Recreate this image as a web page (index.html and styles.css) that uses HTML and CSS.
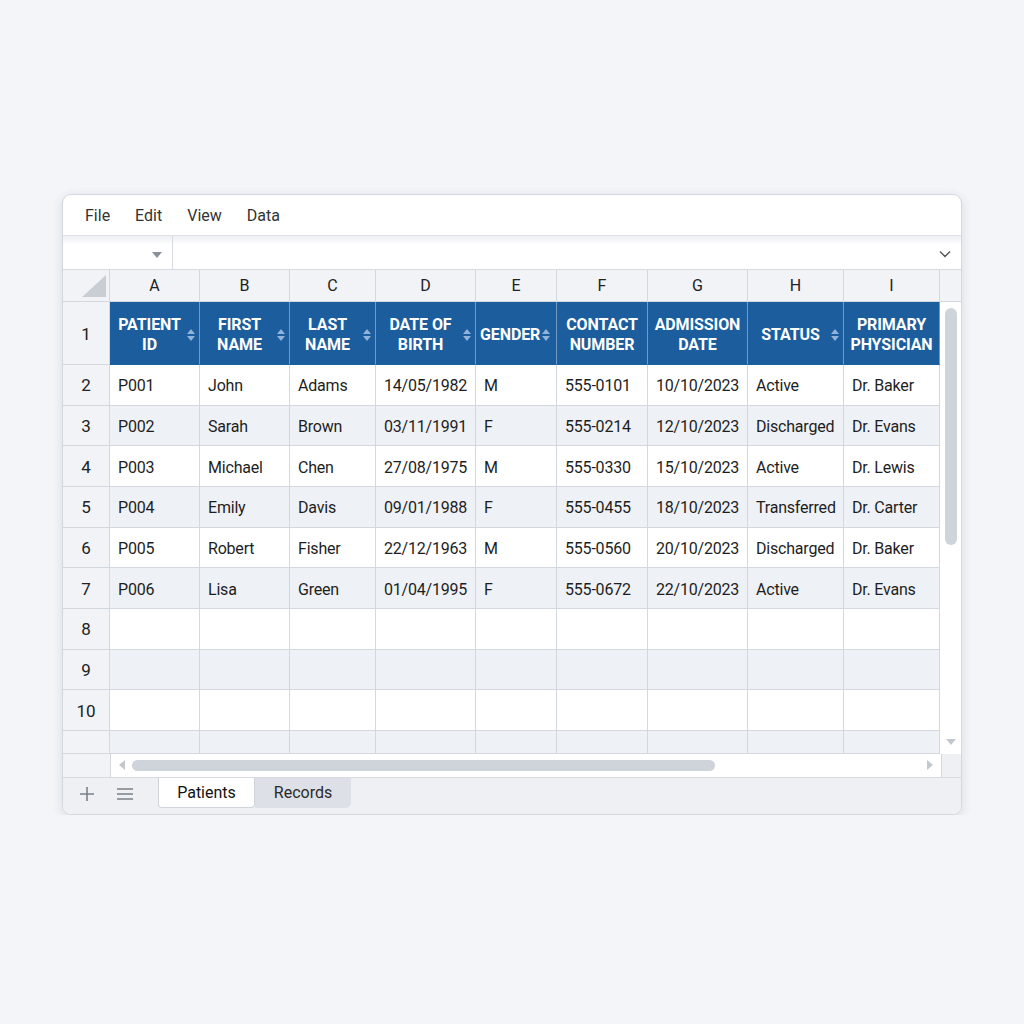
FILE: index.html
```html
<!DOCTYPE html>
<html lang="en">
<head>
  <meta charset="UTF-8">
  <title>Patients</title>
  <link rel="stylesheet" href="styles.css">
</head>
<body>

<div class="window">
  <div class="menubar">
    <span>File</span>
    <span>Edit</span>
    <span>View</span>
    <span>Data</span>
  </div>

  <div class="formulabar">
    <div class="namebox">
      <svg width="10" height="6" viewBox="0 0 10 6"><path d="M0 0h10L5 6z" fill="#8a9099"/></svg>
    </div>
    <div class="formula">
      <svg width="12" height="8" viewBox="0 0 12 8"><path d="M1 1.5l5 5 5-5" fill="none" stroke="#555" stroke-width="1.4"/></svg>
    </div>
  </div>

  <div class="sheet">
    <div class="cells">
      <!-- column letters -->
      <div class="corner">
        <svg width="24" height="22" viewBox="0 0 24 22"><path d="M24 0V22H0z" fill="#c9ced5"/></svg>
      </div>
      <div class="colhead">A</div>
      <div class="colhead">B</div>
      <div class="colhead">C</div>
      <div class="colhead">D</div>
      <div class="colhead">E</div>
      <div class="colhead">F</div>
      <div class="colhead">G</div>
      <div class="colhead">H</div>
      <div class="colhead">I</div>

      <!-- row 1: titles -->
      <div class="rowhead">1</div>
      <div class="th"><span>Patient<br>ID</span><svg class="sort" width="8" height="12" viewBox="0 0 8 12"><path d="M4 0L8 5H0zM0 7h8L4 12z"/></svg></div>
      <div class="th"><span>First<br>Name</span><svg class="sort" width="8" height="12" viewBox="0 0 8 12"><path d="M4 0L8 5H0zM0 7h8L4 12z"/></svg></div>
      <div class="th"><span>Last<br>Name</span><svg class="sort" width="8" height="12" viewBox="0 0 8 12"><path d="M4 0L8 5H0zM0 7h8L4 12z"/></svg></div>
      <div class="th"><span>Date of<br>Birth</span><svg class="sort" width="8" height="12" viewBox="0 0 8 12"><path d="M4 0L8 5H0zM0 7h8L4 12z"/></svg></div>
      <div class="th tight"><span>Gender</span><svg class="sort" width="8" height="12" viewBox="0 0 8 12"><path d="M4 0L8 5H0zM0 7h8L4 12z"/></svg></div>
      <div class="th"><span>Contact<br>Number</span></div>
      <div class="th"><span>Admission<br>Date</span></div>
      <div class="th"><span>Status</span><svg class="sort" width="8" height="12" viewBox="0 0 8 12"><path d="M4 0L8 5H0zM0 7h8L4 12z"/></svg></div>
      <div class="th"><span>Primary<br>Physician</span></div>

      <div class="rowhead">2</div>
      <div class="td">P001</div><div class="td">John</div><div class="td">Adams</div><div class="td">14/05/1982</div><div class="td">M</div><div class="td">555-0101</div><div class="td">10/10/2023</div><div class="td">Active</div><div class="td">Dr. Baker</div>

      <div class="rowhead">3</div>
      <div class="td alt">P002</div><div class="td alt">Sarah</div><div class="td alt">Brown</div><div class="td alt">03/11/1991</div><div class="td alt">F</div><div class="td alt">555-0214</div><div class="td alt">12/10/2023</div><div class="td alt">Discharged</div><div class="td alt">Dr. Evans</div>

      <div class="rowhead">4</div>
      <div class="td">P003</div><div class="td">Michael</div><div class="td">Chen</div><div class="td">27/08/1975</div><div class="td">M</div><div class="td">555-0330</div><div class="td">15/10/2023</div><div class="td">Active</div><div class="td">Dr. Lewis</div>

      <div class="rowhead">5</div>
      <div class="td alt">P004</div><div class="td alt">Emily</div><div class="td alt">Davis</div><div class="td alt">09/01/1988</div><div class="td alt">F</div><div class="td alt">555-0455</div><div class="td alt">18/10/2023</div><div class="td alt">Transferred</div><div class="td alt">Dr. Carter</div>

      <div class="rowhead">6</div>
      <div class="td">P005</div><div class="td">Robert</div><div class="td">Fisher</div><div class="td">22/12/1963</div><div class="td">M</div><div class="td">555-0560</div><div class="td">20/10/2023</div><div class="td">Discharged</div><div class="td">Dr. Baker</div>

      <div class="rowhead">7</div>
      <div class="td alt">P006</div><div class="td alt">Lisa</div><div class="td alt">Green</div><div class="td alt">01/04/1995</div><div class="td alt">F</div><div class="td alt">555-0672</div><div class="td alt">22/10/2023</div><div class="td alt">Active</div><div class="td alt">Dr. Evans</div>

      <div class="rowhead">8</div>
      <div class="td"></div><div class="td"></div><div class="td"></div><div class="td"></div><div class="td"></div><div class="td"></div><div class="td"></div><div class="td"></div><div class="td"></div>

      <div class="rowhead">9</div>
      <div class="td alt"></div><div class="td alt"></div><div class="td alt"></div><div class="td alt"></div><div class="td alt"></div><div class="td alt"></div><div class="td alt"></div><div class="td alt"></div><div class="td alt"></div>

      <div class="rowhead">10</div>
      <div class="td"></div><div class="td"></div><div class="td"></div><div class="td"></div><div class="td"></div><div class="td"></div><div class="td"></div><div class="td"></div><div class="td"></div>

      <div class="rowhead"></div>
      <div class="td alt"></div><div class="td alt"></div><div class="td alt"></div><div class="td alt"></div><div class="td alt"></div><div class="td alt"></div><div class="td alt"></div><div class="td alt"></div><div class="td alt"></div>
    </div>

    <div class="vscroll">
      <div class="vcap"></div>
      <div class="vtrack">
        <div class="vthumb"></div>
        <svg class="vdown" width="10" height="6" viewBox="0 0 10 6"><path d="M0 0h10L5 6z" fill="#c3c8cf"/></svg>
      </div>
    </div>
  </div>

  <div class="hscroll">
    <div class="hleft"></div>
    <div class="htrack">
      <svg width="6" height="10" viewBox="0 0 6 10"><path d="M6 0v10L0 5z" fill="#c3c8cf"/></svg>
      <div class="hthumb"></div>
      <svg width="6" height="10" viewBox="0 0 6 10"><path d="M0 0v10l6-5z" fill="#c3c8cf"/></svg>
    </div>
    <div class="hright"></div>
  </div>

  <div class="tabbar">
    <div class="tabtools">
      <svg width="14" height="14" viewBox="0 0 14 14"><path d="M7 0v14M0 7h14" stroke="#7a8089" stroke-width="1.6"/></svg>
      <svg width="16" height="12" viewBox="0 0 16 12"><path d="M0 1h16M0 6h16M0 11h16" stroke="#7a8089" stroke-width="1.6"/></svg>
    </div>
    <div class="tab active">Patients</div>
    <div class="tab">Records</div>
  </div>
</div>

</body>
</html>
```

FILE: styles.css
```css
body {
  margin: 0;
  padding: 194px 0 0 62px;
  background: #f3f5f9;
  font-family: Roboto, "Liberation Sans", sans-serif;
  color: #222;
}

.window {
  width: 900px;
  box-sizing: border-box;
  background: #fff;
  border: 1px solid #d3d8de;
  border-radius: 9px;
  box-shadow: 0 3px 12px rgba(30, 40, 60, 0.12);
  overflow: hidden;
}

/* menu */
.menubar {
  height: 40px;
  display: flex;
  align-items: center;
  gap: 25px;
  padding-left: 22px;
  font-size: 16px;
  color: #333;
  border-bottom: 1px solid #dde1e6;
}

.formulabar {
  height: 33px;
  display: flex;
  background: linear-gradient(#eef1f4 0, #f6f7f9 5px, #fff 8px);
  border-bottom: 1px solid #d7dbe1;
}

.namebox {
  width: 110px;
  border-right: 1px solid #d7dbe1;
  display: flex;
  align-items: center;
  justify-content: flex-end;
  padding: 4px 10px 0 0;
  box-sizing: border-box;
}

.formula {
  flex: 1;
  display: flex;
  align-items: center;
  justify-content: flex-end;
  padding: 3px 10px 0 0;
}

/* grid */
.sheet {
  display: flex;
}

.cells {
  display: grid;
  grid-template-columns: 47px 90px 90px 86px 100px 81px 91px 100px 96px 96px;
  grid-template-rows: 32px 63px repeat(9, 40.67px) 23px;
  font-size: 16px;
}

.cells > div {
  box-sizing: border-box;
  border-right: 1px solid #d3d8df;
  border-bottom: 1px solid #d3d8df;
}

.corner {
  background: #f1f3f6;
  display: flex;
  align-items: flex-end;
  justify-content: flex-end;
  padding: 0 3px 4px 0;
}

.colhead {
  background: #f1f3f6;
  display: flex;
  align-items: center;
  justify-content: center;
  color: #222;
}

.rowhead {
  background: #f1f3f6;
  display: flex;
  align-items: center;
  justify-content: center;
  font-size: 17px;
  padding-top: 1px;
}

.th {
  background: #1b5d9d;
  color: #fff;
  font-weight: bold;
  text-transform: uppercase;
  font-size: 16px;
  line-height: 20px;
  letter-spacing: -0.1px;
  display: flex;
  align-items: center;
  padding: 3px 4px 0 4px;
  border-right-color: #6f9ac6 !important;
  border-bottom-color: #1b5d9d !important;
}

.th span {
  flex: 1;
  text-align: center;
}

.th.tight span {
  flex: none;
}

.sort {
  flex: none;
  margin-left: 2px;
  fill: #8fb3d9;
}

.td {
  display: flex;
  align-items: center;
  padding: 2px 0 0 8px;
  letter-spacing: -0.2px;
  color: #1e1e1e;
}

.td.alt {
  background: #eef1f6;
}

/* scrollbars */
.vscroll {
  width: 21px;
  display: flex;
  flex-direction: column;
}

.vcap {
  height: 32px;
  background: #f1f3f6;
  border-bottom: 1px solid #d3d8df;
  box-sizing: border-box;
}

.vtrack {
  flex: 1;
  position: relative;
  padding-top: 6px;
}

.vthumb {
  width: 12px;
  height: 237px;
  margin-left: 5px;
  border-radius: 6px;
  background: #cfd4da;
}

.vdown {
  position: absolute;
  left: 6px;
  bottom: 9px;
}

.hscroll {
  height: 23px;
  display: flex;
  border-bottom: 1px solid #d7dbe1;
}

.hleft {
  width: 47px;
  background: #f1f3f6;
  border-right: 1px solid #d3d8df;
}

.htrack {
  width: 830px;
  display: flex;
  align-items: center;
  gap: 7px;
  padding: 0 8px 0 8px;
  box-sizing: border-box;
}

.hthumb {
  width: 583px;
  height: 11px;
  border-radius: 6px;
  background: #cfd4da;
  margin-right: auto;
}

.hright {
  flex: 1;
  background: #eef0f3;
  border-left: 1px solid #d3d8df;
}

/* sheet tabs */
.tabbar {
  height: 36px;
  background: #eef0f3;
  display: flex;
  align-items: flex-start;
}

.tabtools {
  width: 95px;
  height: 30px;
  display: flex;
  align-items: center;
  gap: 23px;
  padding: 2px 0 0 17px;
  box-sizing: border-box;
}

.tab {
  height: 30px;
  width: 96px;
  display: flex;
  align-items: center;
  justify-content: center;
  font-size: 16px;
  color: #2a2a2a;
  background: #dde1e7;
  border-radius: 0 0 5px 0;
  box-sizing: border-box;
}

.tab.active {
  width: 97px;
  background: #fff;
  border: 1px solid #cfd4da;
  border-top: none;
  border-radius: 0 0 4px 4px;
  color: #111;
}
```
